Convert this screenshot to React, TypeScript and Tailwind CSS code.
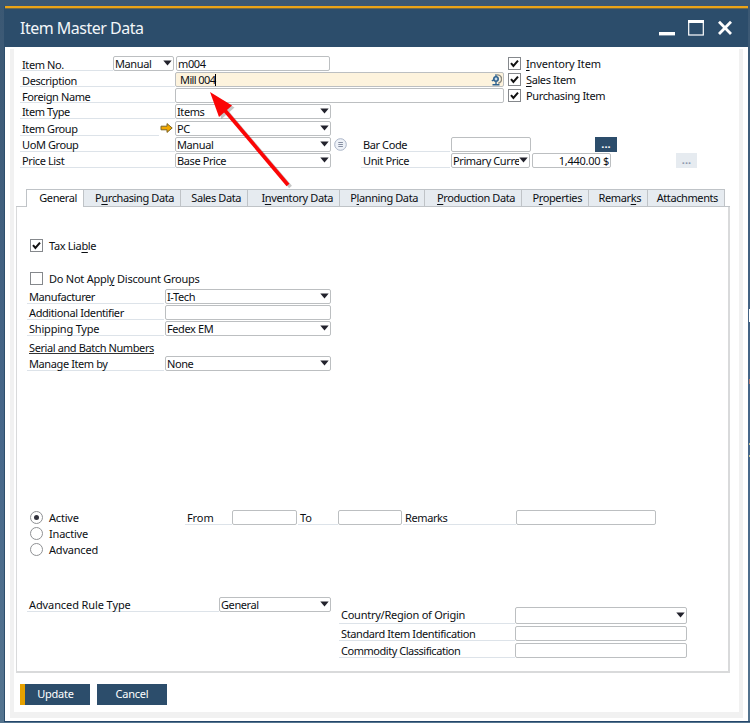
import React from 'react';

// The underlined letter of a caption is its Alt shortcut
const Caption = ({ text, hot }: { text: string; hot?: number }) => {
  if (hot === undefined) return <>{text}</>;
  return (
    <>
      {text.slice(0, hot)}
      <span className="underline underline-offset-2">{text[hot]}</span>
      {text.slice(hot + 1)}
    </>
  );
};

const Label = ({ children, className = '' }: { children: React.ReactNode; className?: string }) => (
  <div className={`shrink-0 border-b border-[#dde3e9] pl-[2px] whitespace-nowrap ${className}`}>{children}</div>
);

const Field = ({ children, className = '' }: { children?: React.ReactNode; className?: string }) => (
  <div
    className={`flex shrink-0 items-center overflow-hidden rounded-[2px] border border-[#bcbfc1] px-px leading-[15px] whitespace-nowrap ${className}`}
  >
    {children}
  </div>
);

const Select = ({ value, className = '' }: { value?: string; className?: string }) => (
  <Field className={className}>
    <span className="min-w-0 flex-1 overflow-hidden">{value}</span>
    <svg width="9" height="6" viewBox="0 0 9 6" className="mb-[2px] shrink-0">
      <path d="M0.3 0.5h8.4L4.5 5.6z" fill="#22222c" />
    </svg>
  </Field>
);

const Check = ({ text, hot, checked, className = '' }: { text: string; hot?: number; checked?: boolean; className?: string }) => (
  <div className={`flex h-[13px] items-center whitespace-nowrap ${className}`}>
    <span className="flex size-[13px] shrink-0 items-center justify-center border border-[#85888c] bg-white">
      {checked && (
        <svg width="9" height="9" viewBox="0 0 9 9">
          <path d="M1 4.2L3.4 7L8 1.6" fill="none" stroke="#111" strokeWidth="2" />
        </svg>
      )}
    </span>
    <span className="leading-[13px]">
      <Caption text={text} hot={hot} />
    </span>
  </div>
);

const Radio = ({ text, checked }: { text: string; checked?: boolean }) => (
  <div className="flex h-[13px] items-center gap-[6px] tracking-[-0.2px]">
    <span className="flex size-[13px] items-center justify-center rounded-full border border-[#8f9194]">
      {checked && <span className="size-[5px] rounded-full bg-[#33333d]" />}
    </span>
    <span className="leading-[13px]">{text}</span>
  </div>
);

const TABS = [
  { text: 'General', width: 'w-[57px]', active: true },
  { text: 'Purchasing Data', hot: 1, width: 'w-[97px]' },
  { text: 'Sales Data', width: 'w-[67px]' },
  { text: 'Inventory Data', hot: 1, width: 'w-[92px]' },
  { text: 'Planning Data', hot: 1, width: 'w-[85px]' },
  { text: 'Production Data', hot: 0, width: 'w-[97px]' },
  { text: 'Properties', hot: 1, width: 'w-[67px]' },
  { text: 'Remarks', hot: 5, width: 'w-[59px]' },
  { text: 'Attachments', width: 'w-[77px]' },
];

const TitleBar = () => (
  <div className="flex h-[38px] items-center justify-between bg-[#2c4d6b] pr-[15px] pl-[15px]">
    <span className="text-[16px] leading-[38px] tracking-[-0.5px] text-[#f2f6f9]">Item Master Data</span>
    <div className="flex gap-[13px]">
      <svg width="16" height="16" viewBox="0 0 16 16">
        <rect x="0" y="12" width="16" height="3.4" fill="#fff" />
      </svg>
      <svg width="16" height="16" viewBox="0 0 16 16">
        <rect x="0.7" y="0.7" width="14.6" height="14.3" fill="none" stroke="#fff" strokeWidth="1.2" />
        <rect x="0" y="0" width="16" height="3" fill="#fff" />
      </svg>
      <svg width="16" height="16" viewBox="0 0 16 16">
        <path d="M2 1.8L14 14M14 1.8L2 14" stroke="#fff" strokeWidth="2.8" />
      </svg>
    </div>
  </div>
);

const HeaderForm = () => (
  <div className="h-[140px] pt-[7px] pl-[6px]">
    <div className="mb-px flex h-[15px]">
      <Label className="w-[93px] leading-[17px]">Item No.</Label>
      <Select value="Manual" className="w-[61px]" />
      <Field className="ml-[2px] w-[154px]">m004</Field>
      <Check text="Inventory Item" hot={0} checked className="mt-px ml-[178px] gap-[5px] tracking-[-0.15px]" />
    </div>
    <div className="mb-px flex h-[15px]">
      <Label className="w-[155px] leading-[17px]">Description</Label>
      <Field className="w-[329px] justify-between bg-[#fdf3dd]">
        <span className="flex items-center pl-[3px] tracking-[-0.6px]">
          Mill 004
          <span className="h-[12px] w-px bg-black" />
        </span>
        <svg width="11" height="12" viewBox="0 0 11 12">
          <path d="M6 0.9a4.2 4.2 0 0 1 1.2 8.3" fill="none" stroke="#8c8a80" strokeWidth="1.5" />
          <circle cx="5" cy="5" r="2.2" fill="#c9dcec" stroke="#2f628f" strokeWidth="1.6" />
          <path d="M5 0.3v2.4M5 7.4v3M1.5 10.8h7M0.8 6.8l2-1" stroke="#2f628f" strokeWidth="1.4" />
        </svg>
      </Field>
      <Check text="Sales Item" hot={0} checked className="mt-px ml-[4px] gap-[5px] tracking-[-0.4px]" />
    </div>
    <div className="mb-px flex h-[15px]">
      <Label className="w-[155px] leading-[17px]">Foreign Name</Label>
      <Field className="w-[329px]" />
      <Check text="Purchasing Item" checked className="mt-px ml-[4px] gap-[5px] tracking-[-0.37px]" />
    </div>
    <div className="mb-[2px] flex h-[15px]">
      <Label className="w-[155px]">Item Type</Label>
      <Select value="Items" className="w-[156px]" />
    </div>
    <div className="mb-px flex h-[15px]">
      <Label className="w-[139px]">Item Group</Label>
      <svg width="16" height="15" viewBox="0 0 16 15" className="shrink-0">
        <path d="M2 5.2h6V2.6L13.2 7L8 11.4V8.8H2z" fill="#f2a900" stroke="#7c6427" strokeWidth="1" />
      </svg>
      <Select value="PC" className="w-[156px]" />
    </div>
    <div className="mb-px flex h-[15px]">
      <Label className="w-[155px]">UoM Group</Label>
      <Select value="Manual" className="w-[156px]" />
      <svg width="13" height="13" viewBox="0 0 13 13" className="mt-px ml-[3px] shrink-0">
        <circle cx="6.5" cy="6.5" r="5.8" fill="#eef2f8" stroke="#a9b3c6" />
        <path d="M4.3 4.5h4.6M4.3 6.5h4.6M4.3 8.5h4.6" stroke="#7a8397" strokeWidth="0.9" />
      </svg>
      <Label className="ml-[14px] w-[89px]">Bar Code</Label>
      <Field className="ml-px w-[80px]" />
      <div className="ml-[64px] w-[22px] bg-[#2c4d6b] text-center leading-[13px] font-bold tracking-normal text-white">...</div>
    </div>
    <div className="flex h-[15px]">
      <Label className="w-[155px]">Price List</Label>
      <Select value="Base Price" className="w-[156px]" />
      <Label className="ml-[30px] w-[89px]">Unit Price</Label>
      <Select value="Primary Curre" className="ml-px w-[79px]" />
      <Field className="ml-[2px] w-[79px] justify-end tracking-[-0.25px]">1,440.00 $</Field>
      <div className="ml-[65px] w-[21px] bg-[#e6ebf0] text-center leading-[13px] font-bold tracking-normal text-[#8c96ad]">...</div>
    </div>
  </div>
);

const TabStrip = () => (
  <div className="flex h-[18px] pl-[2px]">
    <div className="w-[10px] border-b border-[#c3c6c9]" />
    {TABS.map((tab) => (
      <div
        key={tab.text}
        className={`flex shrink-0 items-start justify-end border-t border-l border-[#bfc3c7] pr-[6px] whitespace-nowrap ${tab.width} ${
          tab.active ? 'bg-white' : 'border-b bg-[#e6ebf0]'
        }`}
      >
        <span>
          <Caption text={tab.text} hot={tab.hot} />
        </span>
      </div>
    ))}
    <div className="w-[6px] border-b border-l border-[#bfc3c7]" />
  </div>
);

const GeneralTab = () => (
  <div className="ml-[2px] h-[466px] w-[714px] border-r-2 border-b-2 border-l border-[#d9dadb] pt-[32px] pl-[10px]">
    <Check text="Tax Liable" hot={7} checked className="ml-[3px] gap-[6px] tracking-[-0.35px]" />
    <Check text="Do Not Apply Discount Groups" hot={11} className="mt-[20px] ml-[3px] gap-[6px] tracking-[-0.25px]" />
    <div className="mt-[4px] flex h-[15px]">
      <Label className="mr-px w-[137px]">Manufacturer</Label>
      <Select value="I-Tech" className="w-[166px]" />
    </div>
    <div className="mt-px flex h-[15px]">
      <Label className="mr-px w-[137px]">Additional Identifier</Label>
      <Field className="w-[166px]" />
    </div>
    <div className="mt-px flex h-[15px]">
      <Label className="mr-px w-[137px] tracking-[-0.2px]">Shipping Type</Label>
      <Select value="Fedex EM" className="w-[166px]" />
    </div>
    <div className="mt-[4px] flex h-[16px] pl-[2px]">
      <span className="h-[14px] border-b border-[#333] leading-[15px]">Serial and Batch Numbers</span>
    </div>
    <div className="flex h-[15px]">
      <Label className="mr-px w-[137px]">Manage Item by</Label>
      <Select value="None" className="w-[166px]" />
    </div>

    <div className="mt-[139px] flex h-[87px] items-start">
      <div className="flex w-[158px] flex-col gap-[3px] pt-px pl-[3px]">
        <Radio text="Active" checked />
        <Radio text="Inactive" />
        <Radio text="Advanced" />
      </div>
      <Label className="h-[15px] w-[47px] tracking-[-0.1px]">From</Label>
      <Field className="h-[15px] w-[65px]" />
      <Label className="ml-px h-[15px] w-[40px] tracking-normal">To</Label>
      <Field className="h-[15px] w-[64px]" />
      <Label className="ml-px h-[15px] w-[113px]">Remarks</Label>
      <Field className="h-[15px] w-[140px]" />
    </div>

    <div className="flex items-start">
      <Label className="h-[15px] w-[192px] tracking-[-0.1px]">Advanced Rule Type</Label>
      <Select value="General" className="h-[15px] w-[112px]" />
      <div className="ml-[8px] pt-[10px]">
        <div className="flex h-[17px]">
          <Label className="w-[176px] tracking-[-0.25px]">Country/Region of Origin</Label>
          <Select className="w-[172px]" />
        </div>
        <div className="mt-[2px] flex h-[15px]">
          <Label className="w-[176px]">Standard Item Identification</Label>
          <Field className="w-[172px]" />
        </div>
        <div className="mt-[2px] flex h-[15px]">
          <Label className="w-[176px] tracking-[-0.47px]">Commodity Classification</Label>
          <Field className="w-[172px]" />
        </div>
      </div>
    </div>
  </div>
);

export default function App() {
  return (
    <div className="relative h-[723px] w-[750px] overflow-hidden bg-gradient-to-b from-[#3b5873] via-[#46678a] via-60% to-[#54748f] pt-[6px] pr-[2px] pl-[4px] font-['Noto_Sans','Liberation_Sans',sans-serif] text-[11px] leading-[15px] tracking-[-0.4px] text-[#0c0f14]">
      <div className="flex h-[715px] flex-col border-l border-[#2c4d6b] bg-white">
        <div className="h-[3px] shrink-0 border-b border-[#6d6a4c] bg-[#eba417]" />
        <TitleBar />
        <div className="mt-[2px] ml-[5px] h-[669px] w-[733px] shrink-0 border-r-4 border-b-[6px] border-l-4 border-[#f1f1f1] bg-white">
          <HeaderForm />
          <TabStrip />
          <GeneralTab />
          <div className="flex gap-[7px] pt-[11px] pl-[6px] tracking-[-0.2px] text-white">
            <div className="h-[21px] w-[70px] border-l-[5px] border-[#e6a100] bg-[#2c4d6b] pr-[4px] text-center leading-[19px]">Update</div>
            <div className="h-[21px] w-[70px] bg-[#2c4d6b] text-center leading-[19px]">Cancel</div>
          </div>
        </div>
      </div>
      <div className="-mr-[2px] h-px bg-[#24466a]" />

      {/* Callout arrow pointing at the description */}
      <svg width="100" height="110" viewBox="0 0 100 110" className="absolute top-[85px] left-[200px]">
        <g opacity="0.3" transform="translate(2.5 2)">
          <path d="M22 22L88 100" stroke="#444" strokeWidth="3.6" />
          <path d="M10 7L32 20.5L19 32z" fill="#444" />
        </g>
        <path d="M22 22L88 100" stroke="#fb0505" strokeWidth="3.8" />
        <path d="M10 7L32 20.5L19 32z" fill="#fb0505" />
      </svg>
      <div className="absolute top-[309px] right-0 h-[13px] w-px bg-white" />
      <div className="absolute top-[379px] right-0 h-[5px] w-px bg-[#b98074]" />
      <div className="absolute top-[443px] right-0 h-[2px] w-px bg-[#c9c49a]" />
      <div className="absolute top-[455px] right-0 h-[2px] w-px bg-[#c9c49a]" />
    </div>
  );
}
